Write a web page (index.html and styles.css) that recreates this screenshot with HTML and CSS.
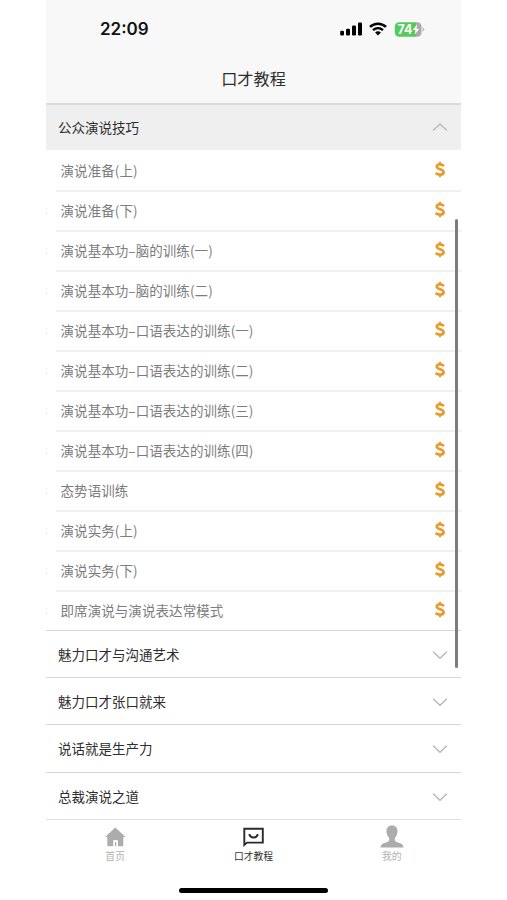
FILE: index.html
```html
<!DOCTYPE html>
<html lang="zh-CN">
<head>
    <meta charset="UTF-8">
    <meta name="viewport" content="width=device-width, initial-scale=1.0">
    <title>口才教程</title>
    <link rel="stylesheet" href="styles.css">
</head>
<body>
    <svg width="0" height="0" class="defs">
        <symbol id="coin" viewBox="0 0 12 17">
            <path d="M10 4.9C8.8 3.8 7.4 3.3 5.9 3.3C4 3.3 2.8 4.2 2.8 5.6C2.8 8.9 9.6 7.6 9.6 11.2C9.6 12.8 8.2 13.7 6.1 13.7C4.3 13.7 2.8 13.1 1.6 12" fill="none" stroke="#e99b2d" stroke-width="2.7"/>
            <path d="M6 0.8V3M6 14V16.2" stroke="#e99b2d" stroke-width="2"/>
        </symbol>
    </svg>
    <div class="phone">
        <div class="top">
            <div class="status-bar">
                <span class="time">22:09</span>
                <div class="status-icons">
                    <svg class="signal" width="22" height="14" viewBox="0 0 22 14">
                        <rect x="0.2" y="8.7" width="3.8" height="4.8" rx="1.2"/>
                        <rect x="6" y="6.7" width="4" height="6.8" rx="1.2"/>
                        <rect x="12" y="3.6" width="4" height="9.9" rx="1.2"/>
                        <rect x="18" y="0.5" width="4" height="13" rx="1.2"/>
                    </svg>
                    <svg class="wifi" width="18" height="14" viewBox="0 0 18 14">
                        <path d="M1 4.9C5.5 0.6 12.5 0.6 17 4.9" fill="none" stroke="#000" stroke-width="2.5"/>
                        <path d="M4 8.2C7 5.5 11 5.5 14 8.2" fill="none" stroke="#000" stroke-width="2.4"/>
                        <path d="M6.1 10.4C7.7 9 10.3 9 11.9 10.4L9 13.4Z"/>
                    </svg>
                    <svg class="battery" width="31" height="15" viewBox="0 0 31 15">
                        <path d="M5.5 0.2H22V14.7H5.5Q0.8 14.7 0.8 10V5Q0.8 0.2 5.5 0.2Z" fill="#55c95c"/>
                        <path d="M22 0.2H23Q27.5 0.2 27.5 5V10Q27.5 14.7 23 14.7H22Z" fill="#aaa"/>
                        <path d="M28.5 5.2Q30.3 6 30.3 7.5T28.5 9.8Z" fill="#bbb"/>
                        <text x="3.5" y="12" class="battery-text">74</text>
                        <path d="M23.2 2.3L18.6 8H21.4L20.5 12.7L25.3 6.7H22.4Z" fill="#fff"/>
                    </svg>
                </div>
            </div>
            <div class="title">口才教程</div>
        </div>

        <div class="course-list">
            <div class="group open">
                <span>公众演说技巧</span>
                <svg class="arrow" width="16" height="10" viewBox="0 0 16 10"><path d="M1.2 8.5L8 2L14.8 8.5"/></svg>
            </div>
            <ul class="lessons">
                <li><span>演说准备(上)</span><svg class="coin"><use href="#coin"/></svg></li>
                <li><span>演说准备(下)</span><svg class="coin"><use href="#coin"/></svg></li>
                <li><span>演说基本功–脑的训练(一)</span><svg class="coin"><use href="#coin"/></svg></li>
                <li><span>演说基本功–脑的训练(二)</span><svg class="coin"><use href="#coin"/></svg></li>
                <li><span>演说基本功–口语表达的训练(一)</span><svg class="coin"><use href="#coin"/></svg></li>
                <li><span>演说基本功–口语表达的训练(二)</span><svg class="coin"><use href="#coin"/></svg></li>
                <li><span>演说基本功–口语表达的训练(三)</span><svg class="coin"><use href="#coin"/></svg></li>
                <li><span>演说基本功–口语表达的训练(四)</span><svg class="coin"><use href="#coin"/></svg></li>
                <li><span>态势语训练</span><svg class="coin"><use href="#coin"/></svg></li>
                <li><span>演说实务(上)</span><svg class="coin"><use href="#coin"/></svg></li>
                <li><span>演说实务(下)</span><svg class="coin"><use href="#coin"/></svg></li>
                <li><span>即席演说与演说表达常模式</span><svg class="coin"><use href="#coin"/></svg></li>
            </ul>
            <div class="group">
                <span>魅力口才与沟通艺术</span>
                <svg class="arrow" width="16" height="10" viewBox="0 0 16 10"><path d="M1.2 2.8L8 9.3L14.8 2.8"/></svg>
            </div>
            <div class="group">
                <span>魅力口才张口就来</span>
                <svg class="arrow" width="16" height="10" viewBox="0 0 16 10"><path d="M1.2 2.8L8 9.3L14.8 2.8"/></svg>
            </div>
            <div class="group">
                <span>说话就是生产力</span>
                <svg class="arrow" width="16" height="10" viewBox="0 0 16 10"><path d="M1.2 2.8L8 9.3L14.8 2.8"/></svg>
            </div>
            <div class="group">
                <span>总裁演说之道</span>
                <svg class="arrow" width="16" height="10" viewBox="0 0 16 10"><path d="M1.2 2.8L8 9.3L14.8 2.8"/></svg>
            </div>
            <div class="scrollbar"></div>
        </div>

        <div class="tab-bar">
            <div class="tab">
                <svg width="24" height="23" viewBox="0 0 24 23">
                    <path d="M12.3 1.4L22.5 11H20.3V19.2Q20.3 20.2 19.3 20.2H15V15.2Q15 14 13.8 14H11.4Q10.2 14 10.2 15.2V20.2H5.3Q4.3 20.2 4.3 19.2V11H2.1Z" fill="#acacac"/>
                    <path d="M12.6 16.2V20.2" stroke="#acacac" stroke-width="1.3"/>
                </svg>
                <span>首页</span>
            </div>
            <div class="tab active">
                <svg width="24" height="23" viewBox="0 0 24 23" fill="none" stroke="#2b2b2b">
                    <path d="M3.3 19V2.8H21.8V16.6H6Z" stroke-width="1.9"/>
                    <path d="M8.2 8.1C9.6 12.6 15.4 12.6 16.9 8.1" stroke-width="1.9"/>
                </svg>
                <span>口才教程</span>
            </div>
            <div class="tab">
                <svg width="24" height="23" viewBox="0 0 24 23" fill="#acacac">
                    <path d="M12 -0.6C15.8 -0.6 17.8 2.1 17.5 5.6C17.3 8.4 16.3 10.6 14.8 12.2C14.5 15 15.6 15.7 18.8 16.8C22 17.8 23.3 18.9 23.5 21.6H0.5C0.7 18.9 2 17.8 5.2 16.8C8.4 15.7 9.5 15 9.2 12.2C7.7 10.6 6.7 8.4 6.5 5.6C6.2 2.1 8.2 -0.6 12 -0.6Z"/>
                </svg>
                <span>我的</span>
            </div>
        </div>
        <div class="home-indicator"></div>
    </div>
</body>
</html>
```
FILE: styles.css
```css
body {
    margin: 0;
    background: #fff;
    font-family: "Noto Sans CJK SC", sans-serif;
    color: #2e2e2e;
}

.defs {
    display: block;
}

.phone {
    width: 415px;
    height: 900px;
    margin-left: 46px;
    display: flex;
    flex-direction: column;
    overflow: hidden;
}

.top {
    height: 103px;
    flex: none;
    background: #f8f8f8;
}

.status-bar {
    display: flex;
    justify-content: space-between;
    align-items: center;
    height: 58px;
    padding: 0 36px 0 54px;
}

.time {
    font-family: Inter, sans-serif;
    font-size: 17px;
    font-weight: 600;
    color: #111;
}

.status-icons {
    display: flex;
    align-items: center;
    gap: 7px;
}

.battery-text {
    font-family: Inter, sans-serif;
    font-size: 12.5px;
    font-weight: 700;
    fill: #fff;
}

.title {
    height: 40px;
    line-height: 40px;
    text-align: center;
    font-size: 16.2px;
}

.course-list {
    position: relative;
    flex: none;
}

.group {
    display: flex;
    align-items: center;
    justify-content: space-between;
    box-sizing: border-box;
    height: 47.2px;
    padding: 0 13px 0 12px;
    border-top: 1px solid #d6d6d6;
    font-size: 13.5px;
}

.group.open {
    height: 47px;
    padding-bottom: 2px;
    border-top: 2px solid #dcdcdc;
    background: #efefef;
}

.arrow path {
    fill: none;
    stroke: #b8b8b8;
    stroke-width: 1.4;
}

.lessons {
    list-style: none;
    margin: 0;
    padding: 0 0 0 10px;
}

.lessons li {
    position: relative;
    display: flex;
    align-items: center;
    justify-content: space-between;
    box-sizing: border-box;
    height: 40px;
    padding: 0 15px 1px 4.5px;
    font-size: 13.5px;
    line-height: 20px;
    letter-spacing: 0.07px;
    color: #7d7d7d;
}

.lessons li + li {
    padding-bottom: 3px;
    border-top: 2px solid #f0f0f0;
}

/* row marker cut off by the left edge */
.lessons li + li::before {
    content: "";
    position: absolute;
    left: -10px;
    top: 21px;
    width: 1px;
    height: 1px;
    background: #ccc;
}

.coin {
    width: 12px;
    height: 17px;
}

.scrollbar {
    position: absolute;
    right: 3px;
    top: 116px;
    width: 3px;
    height: 449px;
    border-radius: 2px;
    background: #7c7c7c;
}

.tab-bar {
    display: flex;
    flex: none;
    height: 68px;
    border-top: 1px solid #e3e3e3;
}

.tab {
    flex: 1;
    display: flex;
    flex-direction: column;
    align-items: center;
    padding-top: 6px;
    font-size: 9.8px;
    line-height: 14px;
    color: #b3b3b3;
}

.tab svg {
    overflow: visible;
}

.tab.active {
    color: #333;
}

.home-indicator {
    flex: none;
    width: 149px;
    height: 5px;
    margin: 0 auto;
    border-radius: 3px;
    background: #000;
}
```
